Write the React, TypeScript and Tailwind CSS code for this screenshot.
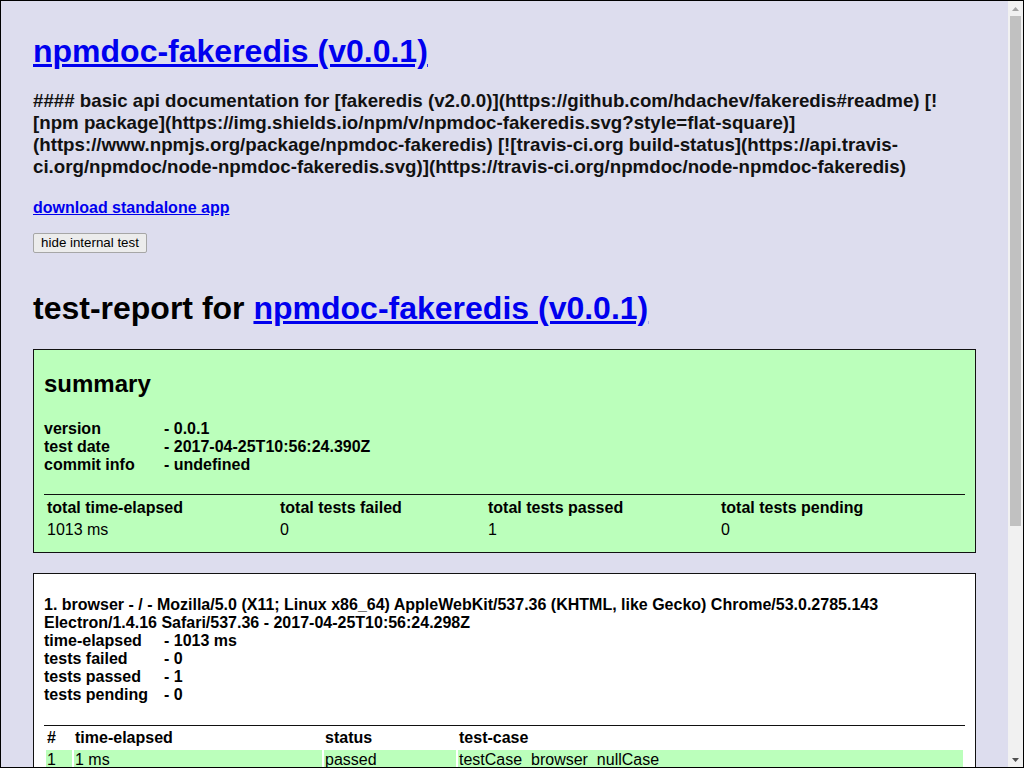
import React from 'react';

// 요약 정보 (key - value)
const summaryInfo: [string, string][] = [
  ['version', '- 0.0.1'],
  ['test date', '- 2017-04-25T10:56:24.390Z'],
  ['commit info', '- undefined'],
];

const summaryTotals = [
  { label: 'total time-elapsed', value: '1013 ms', w: 'w-[231px]' },
  { label: 'total tests failed', value: '0', w: 'w-[206px]' },
  { label: 'total tests passed', value: '1', w: 'w-[231px]' },
  { label: 'total tests pending', value: '0', w: '' },
];

const platformInfo: [string, string][] = [
  ['time-elapsed', '- 1013 ms'],
  ['tests failed', '- 0'],
  ['tests passed', '- 1'],
  ['tests pending', '- 0'],
];

const testCases = [
  { n: '1', time: '1 ms', status: 'passed', name: 'testCase_browser_nullCase' },
];

const Link = ({ children }: { children: React.ReactNode }) => (
  <a href="#" className="text-[#0000ee] underline">
    {children}
  </a>
);

// 세로 스크롤바 (페이지가 더 길다는 표시)
const ScrollBar = () => (
  <div className="flex w-[15px] shrink-0 flex-col bg-[#f1f1f1]">
    <div className="flex h-[15px] items-center justify-center">
      <svg width="7" height="4" viewBox="0 0 7 4">
        <polygon points="3.5,0 7,4 0,4" fill="#a3a3a3" />
      </svg>
    </div>
    <div className="mx-[2px] h-[510px] bg-[#c1c1c1]" />
    <div className="flex-1" />
    <div className="flex h-[15px] items-center justify-center">
      <svg width="7" height="4" viewBox="0 0 7 4">
        <polygon points="0,0 7,0 3.5,4" fill="#505050" />
      </svg>
    </div>
  </div>
);

const App: React.FC = () => {
  return (
    <div className="flex h-[768px] w-[1024px] border border-black bg-[#ddddee] font-['Liberation_Sans',Arial,sans-serif] text-black">
      <div className="min-w-0 flex-1 overflow-hidden px-[32px] pb-[40px]">
        {/* 제목 */}
        <h1 className="mt-[32px] text-[32px] leading-[37px] font-bold">
          <Link>npmdoc-fakeredis (v0.0.1)</Link>
        </h1>

        <h3 className="mt-[20px] text-[18.72px] leading-[22px] font-bold text-[#111]">
          #### basic api documentation for [fakeredis (v2.0.0)](https://github.com/hdachev/fakeredis#readme) [![npm package](https://img.shields.io/npm/v/npmdoc-fakeredis.svg?style=flat-square)](https://www.npmjs.org/package/npmdoc-fakeredis) [![travis-ci.org build-status](https://api.travis-ci.org/npmdoc/node-npmdoc-fakeredis.svg)](https://travis-ci.org/npmdoc/node-npmdoc-fakeredis)
        </h3>

        <div className="mt-[21px] text-[16px] leading-[18.4px] font-bold">
          <Link>download standalone app</Link>
        </div>

        <button className="mt-[15.6px] block h-[20px] w-[114px] rounded-[2px] border border-[#a6a6a6] bg-[#ececec] text-[13.33px] leading-[18px] text-black">
          hide internal test
        </button>

        <h1 className="mt-[36.7px] text-[32px] leading-[37px] font-bold">
          test-report for <Link>npmdoc-fakeredis (v0.0.1)</Link>
        </h1>

        {/* summary 박스 */}
        <div className="mt-[22.3px] border border-[#111] bg-[#bbffbb] px-[10px] pb-[9px]">
          <h2 className="pt-[20px] text-[24px] leading-[27.6px] font-bold">summary</h2>
          <div className="mt-[22px] grid grid-cols-[120px_1fr] text-[16px] leading-[18px] font-bold">
            {summaryInfo.map(([k, v]) => (
              <React.Fragment key={k}>
                <span>{k}</span>
                <span>{v}</span>
              </React.Fragment>
            ))}
          </div>
          <table className="mt-[20.4px] w-full table-fixed border-separate border-spacing-[2px] border-t border-t-[#111] pt-[1px] text-[16px] leading-[18.4px]">
            <thead>
              <tr>
                {summaryTotals.map((t) => (
                  <th key={t.label} className={`p-[1px] text-left font-bold ${t.w}`}>
                    {t.label}
                  </th>
                ))}
              </tr>
            </thead>
            <tbody>
              <tr>
                {summaryTotals.map((t) => (
                  <td key={t.label} className="p-[1px] text-left">
                    {t.value}
                  </td>
                ))}
              </tr>
            </tbody>
          </table>
        </div>

        {/* 플랫폼 박스 */}
        <div className="mt-[20px] border border-[#111] bg-white px-[10px] pb-[10px]">
          <div className="pt-[22.5px] text-[16px] leading-[18px] font-bold">
            1. browser - / - Mozilla/5.0 (X11; Linux x86_64) AppleWebKit/537.36 (KHTML, like Gecko) Chrome/53.0.2785.143 Electron/1.4.16 Safari/537.36 - 2017-04-25T10:56:24.298Z
          </div>
          <div className="grid grid-cols-[120px_1fr] text-[16px] leading-[18px] font-bold">
            {platformInfo.map(([k, v]) => (
              <React.Fragment key={k}>
                <span>{k}</span>
                <span>{v}</span>
              </React.Fragment>
            ))}
          </div>
          <table className="mt-[20.8px] w-full table-fixed border-separate border-spacing-[2px] border-t border-t-[#111] text-[16px] leading-[18.4px]">
            <thead>
              <tr>
                <th className="w-[26px] p-[1px] text-left font-bold">#</th>
                <th className="w-[248px] p-[1px] text-left font-bold">time-elapsed</th>
                <th className="w-[132px] p-[1px] text-left font-bold">status</th>
                <th className="p-[1px] text-left font-bold">test-case</th>
              </tr>
            </thead>
            <tbody>
              {testCases.map((t) => (
                <tr key={t.n}>
                  <td className="bg-[#bbffbb] p-[1px]">{t.n}</td>
                  <td className="bg-[#bbffbb] p-[1px]">{t.time}</td>
                  <td className="bg-[#bbffbb] p-[1px]">{t.status}</td>
                  <td className="bg-[#bbffbb] p-[1px]">{t.name}</td>
                </tr>
              ))}
            </tbody>
          </table>
        </div>

        <div className="mt-[260px] text-center text-[16px] leading-[18.4px]">
          [ this app was created with <Link>utility2</Link> ]
        </div>
      </div>
      <ScrollBar />
    </div>
  );
};

export default App;
